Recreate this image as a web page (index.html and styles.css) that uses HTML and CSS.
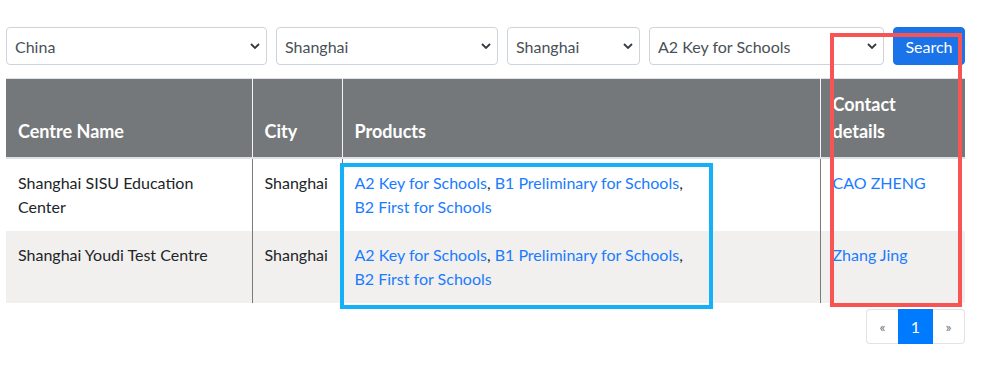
FILE: index.html
```html
<!DOCTYPE html>
<html lang="en">
<head>
    <meta charset="UTF-8">
    <title>Find a Centre</title>
    <meta name="viewport" content="width=device-width, initial-scale=1.0">
    <link rel="stylesheet" href="styles.css">
</head>
<body>
    <div class="centre-finder">
        <form class="search-bar">
            <select class="pick pick-country">
                <option>China</option>
            </select>
            <select class="pick pick-region">
                <option>Shanghai</option>
            </select>
            <select class="pick pick-city">
                <option>Shanghai</option>
            </select>
            <select class="pick pick-product">
                <option>A2 Key for Schools</option>
            </select>
            <button type="button" class="btn-search">Search</button>
        </form>

        <div class="results">
            <table class="centre-table">
                <colgroup>
                    <col class="col-name">
                    <col class="col-city">
                    <col class="col-products">
                    <col class="col-contact">
                </colgroup>
                <thead>
                    <tr>
                        <th>Centre Name</th>
                        <th>City</th>
                        <th>Products</th>
                        <th class="th-contact">Contact details</th>
                    </tr>
                </thead>
                <tbody>
                    <tr>
                        <td>Shanghai SISU Education Center</td>
                        <td>Shanghai</td>
                        <td><a class="product" href="#">A2 Key for Schools</a>, <a class="product" href="#">B1 Preliminary for Schools</a>, <a class="product" href="#">B2 First for Schools</a></td>
                        <td><a href="#">CAO ZHENG</a></td>
                    </tr>
                    <tr>
                        <td>Shanghai Youdi Test Centre</td>
                        <td>Shanghai</td>
                        <td><a class="product" href="#">A2 Key for Schools</a>, <a class="product" href="#">B1 Preliminary for Schools</a>, <a class="product" href="#">B2 First for Schools</a></td>
                        <td><a href="#">Zhang Jing</a></td>
                    </tr>
                </tbody>
            </table>

            <ul class="pager">
                <li><a href="#">&laquo;</a></li>
                <li class="active"><a href="#">1</a></li>
                <li><a href="#">&raquo;</a></li>
            </ul>

            <div class="mark mark-products"></div>
            <div class="mark mark-contact"></div>
        </div>
    </div>
</body>
</html>
```

FILE: styles.css
```css
body {
    margin: 0;
    font-family: "Segoe UI", Lato, "Noto Sans", Arial, sans-serif;
    font-size: 16px;
    line-height: 1.5;
    color: #212529;
    background: #fff;
}
a {
    text-decoration: none;
}
.centre-finder {
    width: 959px;
    padding: 27px 0 0 6px;
}
.search-bar {
    display: flex;
    gap: 9px;
    margin: 0 0 13px 0;
}
.pick {
    appearance: none;
    -webkit-appearance: none;
    height: 38px;
    padding: 0 28px 0 8px;
    font-family: inherit;
    font-size: 16px;
    color: #495057;
    background: #fff url("data:image/svg+xml,%3csvg xmlns='http://www.w3.org/2000/svg' width='10' height='6' viewBox='0 0 10 6'%3e%3cpath fill='none' stroke='%23343a40' stroke-width='1.8' d='M1 1l4 4 4-4'/%3e%3c/svg%3e") no-repeat right 6px center;
    border: 1px solid #ced4da;
    border-radius: 4px;
}
.pick-country { width: 261px; }
.pick-region { width: 222px; }
.pick-city { width: 133px; }
.pick-product { width: 235px; }
.btn-search {
    width: 72px;
    height: 38px;
    padding: 0;
    font-family: inherit;
    font-size: 16px;
    color: #fff;
    background: #1a73e8;
    border: 1px solid #1a73e8;
    border-radius: 4px;
    cursor: pointer;
}

.results {
    position: relative;
}
.centre-table {
    width: 959px;
    table-layout: fixed;
    border-collapse: collapse;
    border-top: 1px solid #dee2e6;
}
.col-name { width: 246px; }
.col-city { width: 90px; }
.col-products { width: 478px; }
.col-contact { width: 145px; }

.centre-table th,
.centre-table td {
    padding: 12px 12px;
    text-align: left;
    font-size: 16px;
}
.centre-table th {
    background: #75787a;
    color: #fff;
    font-weight: bold;
    font-size: 18px;
    line-height: 27px;
    vertical-align: bottom;
    border-bottom: 2px solid #dee2e6;
    border-left: 1px solid #f4f4f4;
}
.centre-table th.th-contact {
    padding-right: 20px;
}
.centre-table td {
    line-height: 24px;
    vertical-align: top;
    border-left: 1px solid #7a7a7a;
}
.centre-table th:first-child,
.centre-table td:first-child {
    border-left: 0;
}
.centre-table tbody tr:nth-child(even) {
    background: #f1f0ee;
}
.centre-table a {
    color: #1a7cff;
}
.centre-table a.product {
    white-space: nowrap;
}

.pager {
    display: flex;
    justify-content: flex-end;
    list-style: none;
    margin: 6px 0 0 0;
    padding: 0;
}
.pager li a {
    display: block;
    width: 32px;
    height: 35px;
    line-height: 33px;
    text-align: center;
    font-size: 14px;
    color: #6c757d;
    border: 1px solid #e3e3e3;
    box-sizing: border-box;
}
.pager li:first-child a {
    border-right: 0;
    border-radius: 4px 0 0 4px;
}
.pager li:last-child a {
    border-left: 0;
    border-radius: 0 4px 4px 0;
}
.pager li.active a {
    width: 35px;
    font-size: 16px;
    color: #fff;
    background: #007bff;
    border-color: #007bff;
}

.mark {
    position: absolute;
    border: 4px solid;
    box-sizing: border-box;
}
.mark-products {
    left: 334px;
    top: 85px;
    width: 373px;
    height: 146px;
    border-color: #14b1f8;
}
.mark-contact {
    left: 824px;
    top: -45px;
    width: 132px;
    height: 274px;
    border-color: #f75555;
}
```
